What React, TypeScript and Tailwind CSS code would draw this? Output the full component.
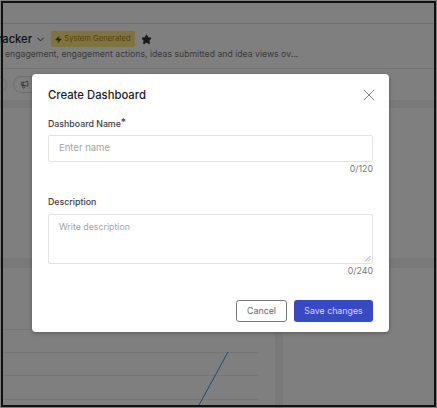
import { X, ChevronDown, Zap, Star, Megaphone } from "lucide-react";

export default function App() {
  return (
    <div className="relative w-[437px] h-[408px] overflow-hidden bg-white font-['Inter',sans-serif]">
      {/* Page behind the dialog */}
      <div className="h-full flex flex-col overflow-hidden">
        <div className="h-[24px] shrink-0 border-b border-[#e4e4e4]" />
        <div className="h-[45px] shrink-0 border-b border-[#e8e8e8] pt-[7px] overflow-hidden">
          <div className="flex items-center h-[16px] -ml-[2px] whitespace-nowrap">
            <span className="text-[11.2px] leading-[16px] font-medium text-[#222]">racker</span>
            <ChevronDown className="ml-[3px] w-[11px] h-[11px] text-[#222]" />
            <span className="ml-[5px] h-[16px] w-[84px] flex items-center justify-center gap-[2px] rounded-[2px] bg-[#fee680] text-[7.6px] text-[#a88a1a]">
              <Zap className="w-[7px] h-[7px] fill-[#5a4a10] text-[#5a4a10]" />
              System Generated
            </span>
            <Star className="ml-[6px] w-[11px] h-[11px] fill-[#333] text-[#333]" />
          </div>
          <div className="text-[8.7px] leading-[14px] text-[#777] whitespace-nowrap pl-[5px]">
            engagement, engagement actions, ideas submitted and idea views ov...
          </div>
        </div>
        <div className="h-[31px] shrink-0 flex items-center gap-[6px]">
          <span className="-ml-[10px] w-[17px] h-[17px] rounded-full border border-[#ddd]" />
          <span className="w-[30px] h-[17px] rounded-full border border-[#ddd] flex items-center pl-[6px]">
            <Megaphone className="w-[9px] h-[9px] text-[#555]" />
          </span>
        </div>
        <div className="flex-1 flex flex-col gap-[10px] pt-[8px] bg-[#f3f3f3]">
          <div className="h-[150px] shrink-0 flex gap-[8px]">
            <div className="w-[275px] bg-white" />
            <div className="flex-1 bg-white" />
          </div>
          <div className="flex-1 flex gap-[8px]">
            <div className="relative w-[275px] bg-white pl-[3px] pr-[17px]">
              <div className="mt-[61px] h-px bg-[#ececec]" />
              <div className="mt-[22px] h-px bg-[#ececec]" />
              <div className="mt-[22px] h-px bg-[#ececec]" />
              <div className="mt-[23px] h-px bg-[#ececec]" />
              <svg className="absolute left-[195px] top-[84px] w-[35px] h-[56px]" viewBox="0 0 35 56" fill="none">
                <path d="M33 0 L4 53" stroke="#4a90c4" strokeWidth="1" />
              </svg>
            </div>
            <div className="flex-1 bg-white" />
          </div>
        </div>
      </div>

      {/* Scrim */}
      <div className="absolute inset-0 bg-black opacity-50" />

      {/* Dialog */}
      <div className="absolute left-[32px] top-[74px] w-[357px] h-[258px] rounded-[4px] bg-white px-[16px] shadow-[0_1px_4px_rgba(0,0,0,0.3)] flex flex-col">
        <div className="flex items-center justify-between h-[40px] pt-[1px] shrink-0">
          <h2 className="text-[11.3px] leading-[18px] font-medium text-[#1b1b1f]">Create Dashboard</h2>
          <X className="w-[20px] h-[20px] mr-[-6px] text-[#777]" strokeWidth={1.1} />
        </div>
        <label className="mt-[3px] text-[8.8px] leading-[14px] font-medium text-[#3c3c43] flex">
          Dashboard Name<span className="text-[10px] leading-[10px]">*</span>
        </label>
        <div className="mt-[4px] h-[27px] shrink-0 rounded-[2px] border border-[#e3e3e3] pl-[10px] flex items-center text-[9.5px] text-[#a3a3a3]">
          Enter name
        </div>
        <div className="text-right text-[8.8px] leading-[14px] text-[#777]">0/120</div>
        <label className="mt-[19px] text-[8.8px] leading-[14px] font-medium text-[#3c3c43]">Description</label>
        <div className="relative mt-[5px] h-[50px] shrink-0 rounded-[2px] border border-[#e3e3e3] pl-[10px] pt-[5px] text-[8.8px] leading-[14px] text-[#a3a3a3]">
          Write description
          <svg className="absolute right-[1px] bottom-[1px] w-[7px] h-[7px]" viewBox="0 0 7 7" fill="none">
            <path d="M1 6.5 L6.5 1 M4 6.5 L6.5 4" stroke="#777" strokeWidth="0.7" />
          </svg>
        </div>
        <div className="text-right text-[8.8px] leading-[14px] text-[#777]">0/240</div>
        <div className="mt-[22px] flex justify-end gap-[7px]">
          <button className="w-[51px] h-[22px] rounded-[3px] border border-[#777] bg-white text-[8.8px] text-[#666]">Cancel</button>
          <button className="w-[79px] h-[22px] rounded-[3px] bg-[#3849c4] text-[8.8px] text-[#d5daf5]">Save changes</button>
        </div>
      </div>

      {/* Screenshot frame */}
      <div className="absolute left-[1px] top-[1px] w-[435px] h-[406px] border-2 border-[#111] pointer-events-none" />
    </div>
  );
}
